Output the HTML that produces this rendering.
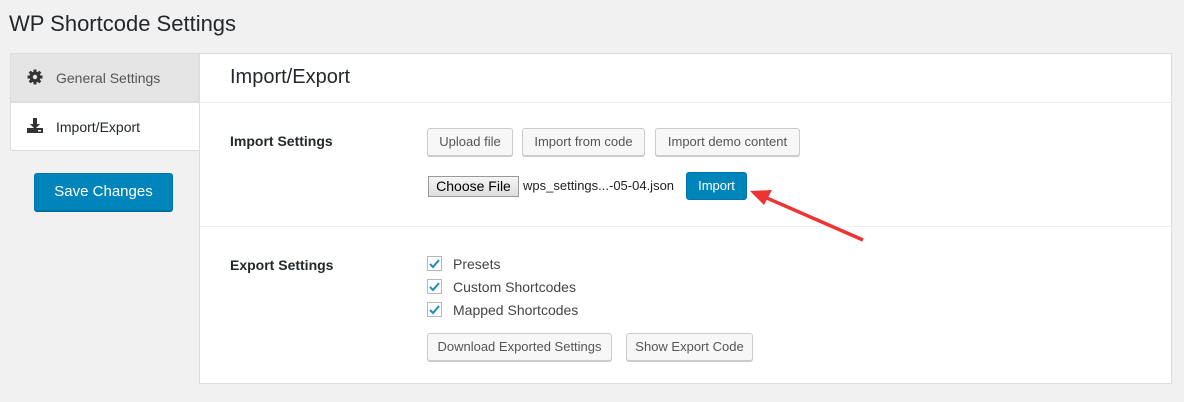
<!DOCTYPE html><html><head><style>
body{margin:0;width:1184px;height:402px;background:#f1f1f1;font-family:"Liberation Sans",sans-serif;color:#23282d;position:relative;overflow:hidden}
.a{position:absolute}
h1{position:absolute;left:9px;top:11px;margin:0;font-size:22px;font-weight:400}
.tab{position:absolute;left:10px;width:189px;height:49px;font-size:14px;line-height:49px;box-sizing:border-box;padding-left:45px}
.btn{position:absolute;height:28px;box-sizing:border-box;border:1px solid #ccc;background:#f7f7f7;border-radius:3px;font-size:13px;line-height:26px;color:#555;text-align:center;box-shadow:0 1px 0 #ccc}
.cb{position:absolute;left:427px;width:15px;height:15px;border:1px solid #b4b9be;box-sizing:border-box;background:#fff}
.cl{position:absolute;left:453px;font-size:14px;color:#444}
.lbl{position:absolute;left:230px;font-size:14px;font-weight:600}
</style></head><body>
<h1>WP Shortcode Settings</h1>
<div class="tab" style="top:53px;background:#e5e5e5;border:1px solid #ddd;color:#555">General Settings</div>
<svg class="a" style="left:27px;top:69px" width="16" height="16" viewBox="0 0 16 16"><g fill="#333"><circle cx="8" cy="8" r="5.5"/><rect x="6.5" y="0.5" width="3" height="15"/><rect x="0.5" y="6.5" width="15" height="3"/><rect x="6.5" y="0.5" width="3" height="15" transform="rotate(45 8 8)"/><rect x="6.5" y="0.5" width="3" height="15" transform="rotate(-45 8 8)"/></g><circle cx="8" cy="8" r="2.2" fill="#e5e5e5"/></svg>
<div class="tab" style="top:102px;background:#fff;border:1px solid #ddd;border-right:none;width:190px">Import/Export</div>
<svg class="a" style="left:27px;top:118px" width="16" height="15" viewBox="0 0 16 15"><path d="M6 0h4v6h3l-5 5-5-5h3z" fill="#333"/><rect x="0" y="10" width="16" height="5" fill="#333"/><rect x="11" y="12" width="3" height="1.5" fill="#fff"/></svg>
<div class="a" style="left:34px;top:173px;width:139px;height:38px;background:#0085ba;border:1px solid #0073aa;box-sizing:border-box;border-radius:3px;color:#fff;font-size:15px;line-height:36px;text-align:center;box-shadow:0 1px 0 #006799">Save Changes</div>
<div class="a" style="left:199px;top:53px;width:973px;height:331px;background:#fff;border:1px solid #ddd;box-sizing:border-box"></div>
<div class="a" style="left:230px;top:66px;font-size:20px">Import/Export</div>
<div class="a" style="left:200px;top:102px;width:971px;height:1px;background:#eee"></div>
<div class="a" style="left:200px;top:226px;width:971px;height:1px;background:#eee"></div>
<div class="lbl" style="top:133px">Import Settings</div>
<div class="btn" style="left:427px;top:128px;width:86px">Upload file</div>
<div class="btn" style="left:522px;top:128px;width:123px">Import from code</div>
<div class="btn" style="left:655px;top:128px;width:145px">Import demo content</div>
<div class="a" style="left:428px;top:176px;width:91px;height:21px;border:1px solid #999;box-sizing:border-box;background:linear-gradient(#f6f6f6,#ddd);font-size:14px;line-height:19px;text-align:center;color:#000">Choose File</div>
<div class="a" style="left:523px;top:178px;font-size:13px;color:#222">wps_settings...-05-04.json</div>
<div class="a" style="left:686px;top:172px;width:61px;height:28px;background:#0085ba;border:1px solid #0073aa;box-sizing:border-box;border-radius:3px;color:#fff;font-size:13px;line-height:26px;text-align:center">Import</div>
<svg class="a" style="left:740px;top:185px" width="130" height="60"><line x1="123" y1="55" x2="20" y2="10" stroke="#e33" stroke-width="3.5"/><path d="M10 6 L32 5 L24 20 Z" fill="#e33"/></svg>
<div class="lbl" style="top:257px">Export Settings</div>
<div class="cb" style="top:256px"></div><div class="cb" style="top:279px"></div><div class="cb" style="top:302px"></div>
<svg class="a" style="left:427px;top:256px" width="16" height="62"><g fill="none" stroke="#1e8cbe" stroke-width="2"><path d="M3 8l3 3 6-7"/><path d="M3 31l3 3 6-7"/><path d="M3 54l3 3 6-7"/></g></svg>
<div class="cl" style="top:256px">Presets</div>
<div class="cl" style="top:279px">Custom Shortcodes</div>
<div class="cl" style="top:302px">Mapped Shortcodes</div>
<div class="btn" style="left:427px;top:333px;width:185px">Download Exported Settings</div>
<div class="btn" style="left:626px;top:333px;width:127px">Show Export Code</div>
</body></html>
